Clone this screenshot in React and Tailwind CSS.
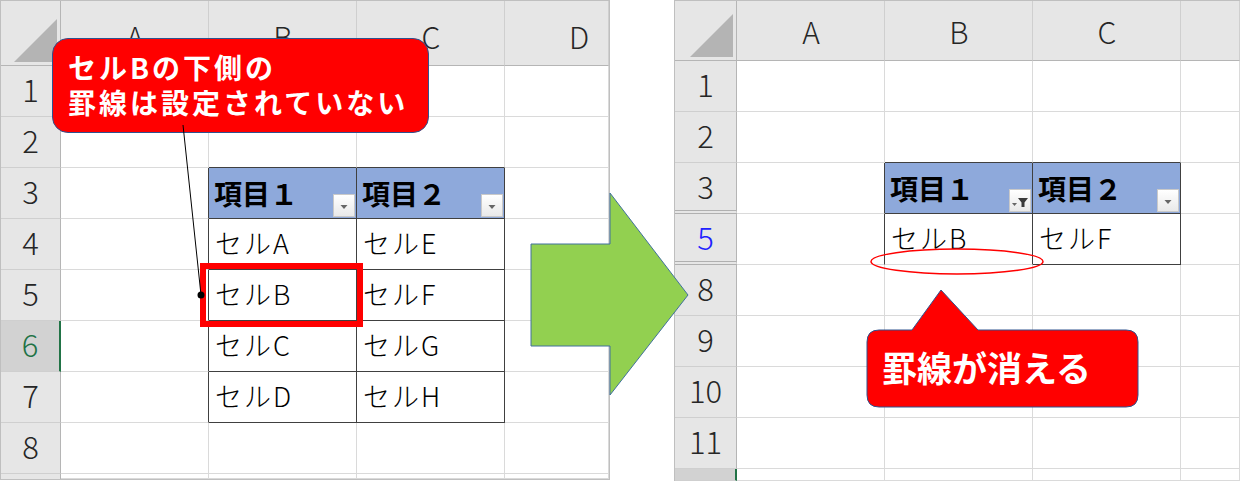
import React from 'react';

function Corner() {
  return (
    <div className="flex items-end justify-end bg-[#e6e6e6] border-r border-b border-r-[#b5b5b5] border-b-[#b5b5b5] pr-[3px] pb-[3px] overflow-hidden">
      <svg width="43" height="43" viewBox="0 0 43 43">
        <polygon points="43,0 43,43 0,43" fill="#b4b4b4" />
      </svg>
    </div>
  );
}

function FilterButton({ filtered }) {
  return (
    <div className="w-[22px] h-[23px] shrink-0 self-end mb-[1px] border border-[#c9c9c9] bg-linear-to-b from-[#ffffff] to-[#e9e9e9] flex items-center justify-center">
      {filtered ? (
        <svg width="20" height="21" viewBox="0 0 20 21">
          <polygon points="2,13 7,13 4.5,16" fill="#666666" />
          <polygon points="8,8 18,8 14.5,12.5 14.5,17 11.5,17 11.5,12.5" fill="#3a3a3a" />
        </svg>
      ) : (
        <svg width="20" height="21" viewBox="0 0 20 21">
          <polygon points="6.5,10 13.5,10 10,14" fill="#666666" />
        </svg>
      )}
    </div>
  );
}

function RowHeader({ row }) {
  let cls =
    'bg-[#e6e6e6] border-r border-b border-r-[#b5b5b5] border-b-[#cfcfcf] flex items-center justify-center pb-[6px] overflow-hidden';
  if (row.kind === 'selected')
    cls =
      'bg-[#d2d2d2] border-r-2 border-b border-r-[#217346] border-b-[#cfcfcf] flex items-center justify-center pb-[6px] overflow-hidden';
  if (row.kind === 'double')
    cls =
      'bg-[#e6e6e6] border-r border-b-4 border-double border-r-[#b5b5b5] border-b-[#b0b0b0] flex items-center justify-center pb-[3px] overflow-hidden';
  let tcls = 'text-[31px] font-light leading-none text-[#262626]';
  if (row.color === 'green') tcls = 'text-[31px] font-light leading-none text-[#217346]';
  if (row.color === 'blue') tcls = 'text-[31px] font-light leading-none text-[#2020ff]';
  return (
    <div className={cls}>
      <span className={tcls}>{row.label}</span>
    </div>
  );
}

function Sheet({ className, colLabels, rows, table, cells, openBottom }) {
  const inT = (r, c) => r >= table.r0 && r <= table.r1 && c >= table.c0 && c <= table.c1;
  const out = [<Corner key="corner" />];
  colLabels.forEach((l, i) =>
    out.push(
      <div
        key={'h' + i}
        className="bg-[#e6e6e6] border-r border-b border-r-[#cfcfcf] border-b-[#b5b5b5] flex items-end justify-start overflow-hidden pb-[14px]"
      >
        <div className="w-[148px] shrink-0 text-center text-[30px] font-light leading-none text-[#262626]">{l}</div>
      </div>
    )
  );
  rows.forEach((row, ri) => {
    const r = ri + 1;
    out.push(<RowHeader key={'r' + r} row={row} />);
    colLabels.forEach((_, ci) => {
      const c = ci + 1;
      const right = inT(r, c) || inT(r, c + 1);
      const open = openBottom && openBottom.r === r && openBottom.c === c;
      const bottom = (inT(r, c) || inT(r + 1, c)) && !open;
      const bcls =
        'border-r border-b ' +
        (right ? 'border-r-[#404040] ' : 'border-r-[#dadada] ') +
        (bottom ? 'border-b-[#404040]' : 'border-b-[#dadada]');
      const cell = cells[r + '-' + c];
      if (cell && cell.type === 'head') {
        out.push(
          <div
            key={r + '-' + c}
            className={'bg-[#8ea9db] flex items-center justify-between pl-[5px] pr-[1px] overflow-hidden ' + bcls}
          >
            <span className="text-[28px] font-bold leading-none text-black">{cell.text}</span>
            <FilterButton filtered={cell.filtered} />
          </div>
        );
      } else if (cell) {
        out.push(
          <div key={r + '-' + c} className={'bg-white flex items-center pl-[6px] pb-[4px] overflow-hidden ' + bcls}>
            <span className="text-[27px] font-light tracking-[2px] leading-none text-black">{cell.text}</span>
          </div>
        );
      } else {
        out.push(<div key={r + '-' + c} className={'bg-white ' + bcls} />);
      }
    });
  });
  return <div className={className}>{out}</div>;
}

const leftRows = [
  { label: '1' },
  { label: '2' },
  { label: '3' },
  { label: '4' },
  { label: '5' },
  { label: '6', kind: 'selected', color: 'green' },
  { label: '7' },
  { label: '8' },
  { label: '' },
];

const leftCells = {
  '3-2': { type: 'head', text: '項目１' },
  '3-3': { type: 'head', text: '項目２' },
  '4-2': { text: 'セルA' },
  '4-3': { text: 'セルE' },
  '5-2': { text: 'セルB' },
  '5-3': { text: 'セルF' },
  '6-2': { text: 'セルC' },
  '6-3': { text: 'セルG' },
  '7-2': { text: 'セルD' },
  '7-3': { text: 'セルH' },
};

const rightRows = [
  { label: '1' },
  { label: '2' },
  { label: '3', kind: 'double' },
  { label: '5', kind: 'double', color: 'blue' },
  { label: '8' },
  { label: '9' },
  { label: '10' },
  { label: '11' },
  { label: '', kind: 'selected' },
];

const rightCells = {
  '3-2': { type: 'head', text: '項目１', filtered: true },
  '3-3': { type: 'head', text: '項目２' },
  '4-2': { text: 'セルB' },
  '4-3': { text: 'セルF' },
};

export default function App() {
  return (
    <div className="relative w-[1240px] h-[481px] bg-white overflow-hidden flex font-['Noto_Sans_CJK_JP','Noto_Sans',sans-serif]">
      <Sheet
        className="w-[610px] h-[480px] shrink-0 border border-[#bfbfbf] grid grid-cols-[60px_148px_148px_148px_104px] grid-rows-[65px_repeat(8,51px)_5px] overflow-hidden"
        colLabels={['A', 'B', 'C', 'D']}
        rows={leftRows}
        table={{ r0: 3, r1: 7, c0: 2, c1: 3 }}
        cells={leftCells}
      />
      <Sheet
        className="ml-[64px] w-[566px] h-[481px] shrink-0 border-l border-t border-[#bfbfbf] grid grid-cols-[62px_148px_148px_148px_59px] grid-rows-[60px_repeat(8,51px)_12px] overflow-hidden"
        colLabels={['A', 'B', 'C', '']}
        rows={rightRows}
        table={{ r0: 3, r1: 4, c0: 2, c1: 3 }}
        cells={rightCells}
        openBottom={{ r: 4, c: 2 }}
      />

      {/* red selection box around B5 */}
      <div className="absolute left-[200px] top-[263px] w-[163px] h-[64px] border-[6px] border-[#ff0000]" />

      {/* left callout */}
      <div className="absolute left-[52px] top-[38px] w-[377px] h-[95px] rounded-[16px] bg-[#ff0000] border border-[#2f528f] pl-[15px] pt-[11px] text-white text-[28px] font-bold tracking-[3px] leading-[35px] whitespace-nowrap">
        <div>セルBの下側の</div>
        <div>罫線は設定されていない</div>
      </div>
      <svg className="absolute left-0 top-0 pointer-events-none" width="620" height="481" viewBox="0 0 620 481">
        <line x1="183" y1="125" x2="201" y2="295" stroke="#000000" strokeWidth="1" />
        <circle cx="201" cy="295" r="3.5" fill="#000000" />
      </svg>

      {/* green arrow */}
      <svg className="absolute left-[530px] top-[192px]" width="160" height="205" viewBox="0 0 160 205">
        <polygon
          points="1,52 80,52 80,1 158,103 80,203 80,154 1,154"
          fill="#92d050"
          stroke="#41719c"
          strokeWidth="1"
        />
      </svg>

      {/* ellipse */}
      <svg className="absolute left-[868px] top-[246px]" width="180" height="32" viewBox="0 0 180 32">
        <ellipse cx="89" cy="15.5" rx="86" ry="12.5" fill="none" stroke="#ff0000" strokeWidth="1.5" />
      </svg>

      {/* right callout */}
      <div className="absolute left-[860px] top-[285px] w-[285px] h-[128px]">
        <svg className="absolute left-0 top-0" width="285" height="128" viewBox="0 0 285 128">
          <path
            d="M19,45 L52,45 L81,5 L118,45 L266,45 Q278,45 278,57 L278,110 Q278,122 266,122 L19,122 Q7,122 7,110 L7,57 Q7,45 19,45 Z"
            fill="#ff0000"
            stroke="#2f528f"
            strokeWidth="1"
          />
        </svg>
        <div className="absolute left-[22px] top-[62px] leading-[40px] text-[35px] font-bold text-white whitespace-nowrap">
          罫線が消える
        </div>
      </div>
    </div>
  );
}
